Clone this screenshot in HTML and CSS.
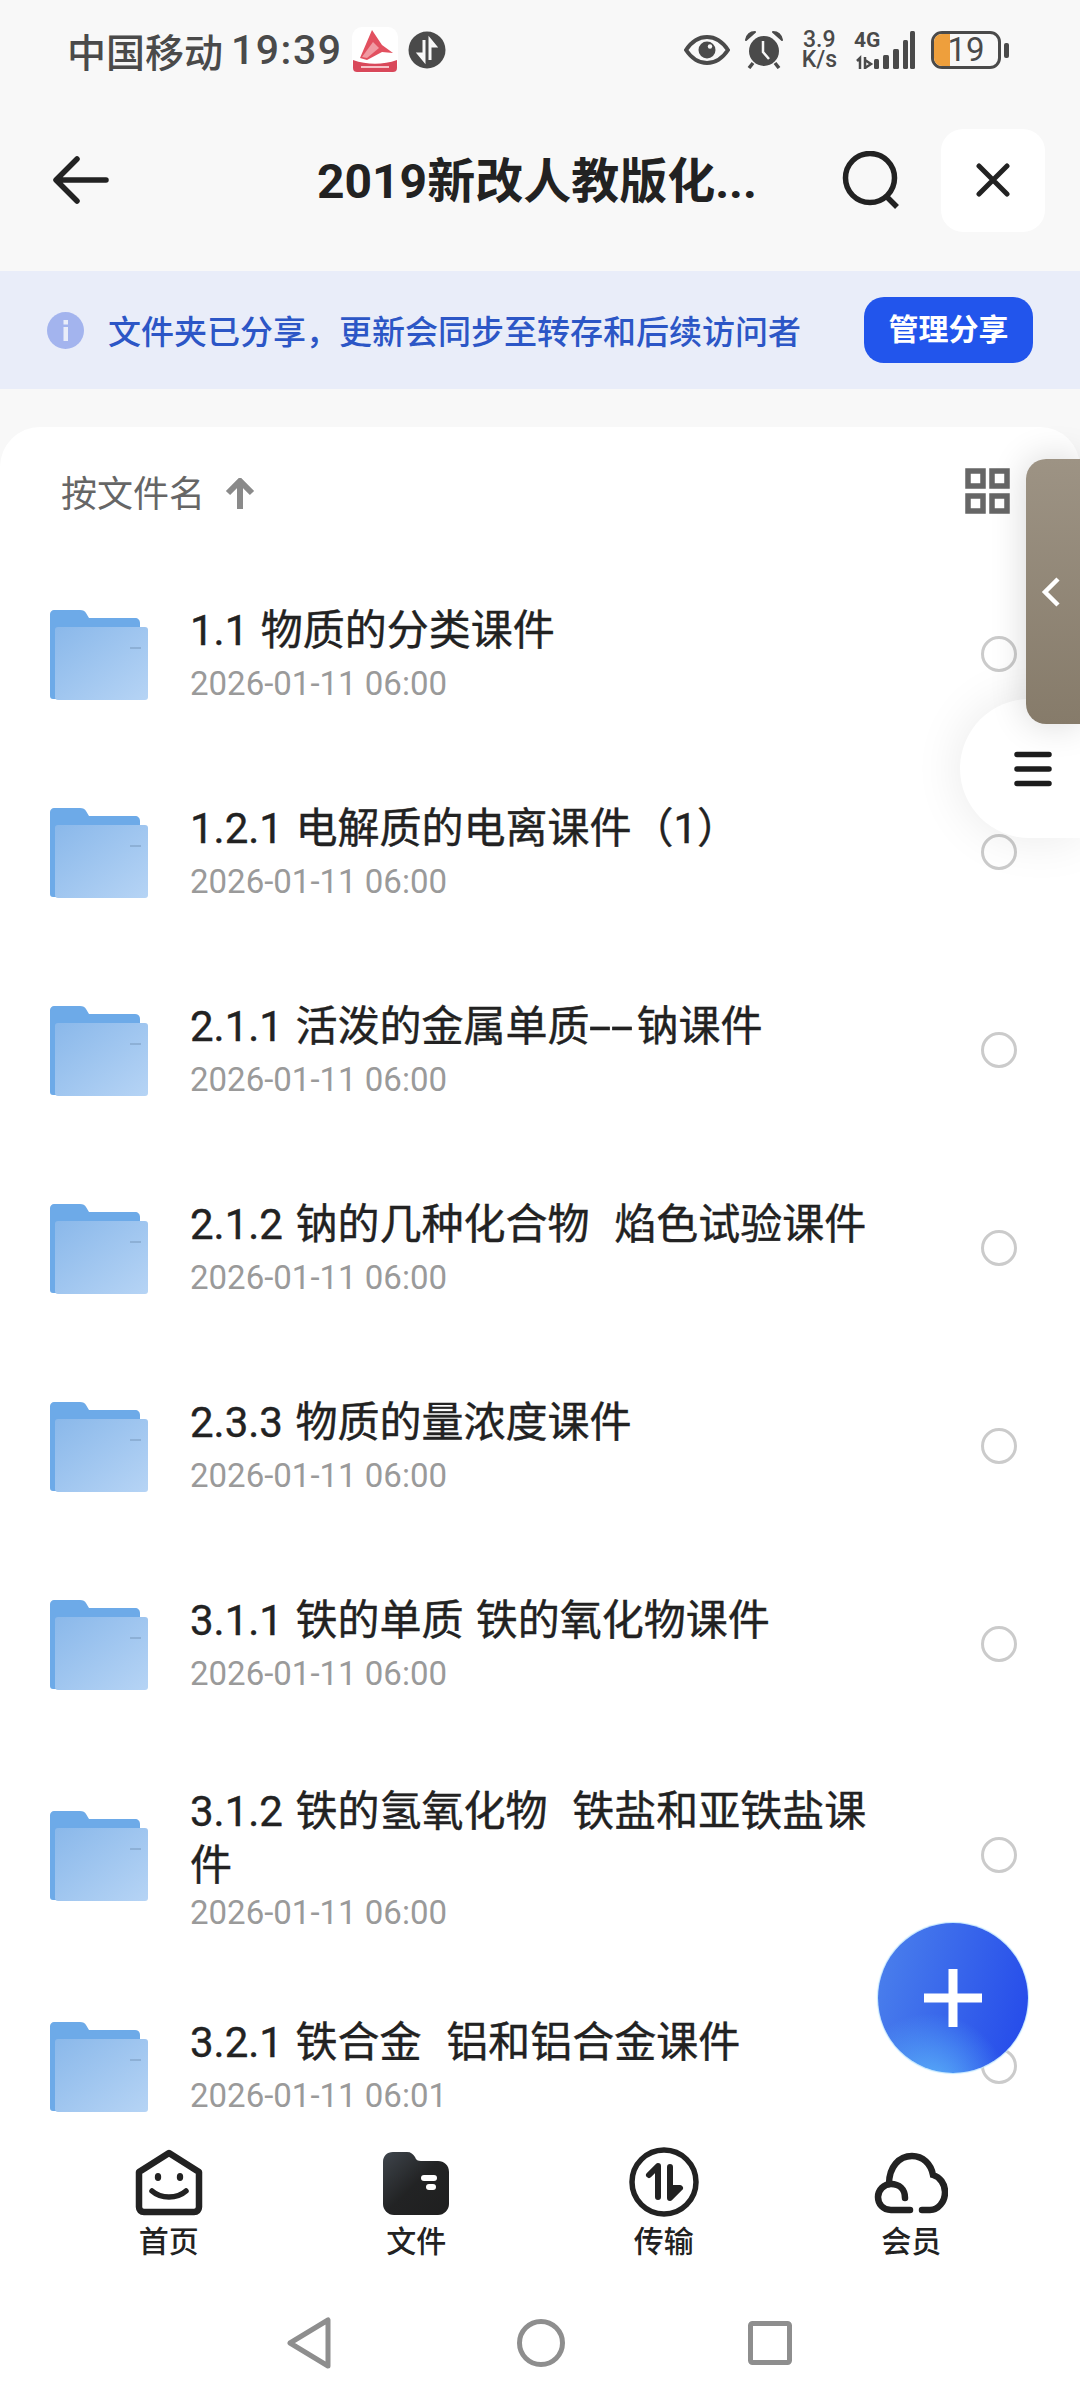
FILE: index.html
```html
<!DOCTYPE html>
<html lang="zh">
<head>
  <meta charset="UTF-8">
  <title>2019新改人教版化学</title>
  <link rel="stylesheet" href="styles.css">
</head>
<body>
<svg class="defs" width="0" height="0">
  <defs>
    <linearGradient id="folderFront" x1="0" y1="0" x2="1" y2="1">
      <stop offset="0" stop-color="#8ab8ea"/>
      <stop offset="1" stop-color="#b6d4f5"/>
    </linearGradient>
    <linearGradient id="tabFolder" x1="0" y1="0" x2="1" y2="1">
      <stop offset="0" stop-color="#3f454c"/>
      <stop offset="0.5" stop-color="#222324"/>
      <stop offset="1" stop-color="#1f1f1f"/>
    </linearGradient>
    <symbol id="folder" viewBox="0 0 98 91">
      <path d="M4 1H30C33 1 35 2 36 4L39 9H85C88 9 90 11 90 14V90H3C1 90 0 89 0 87V5C0 3 2 1 4 1Z" fill="#6daae8"/>
      <rect x="5" y="18" width="93" height="73" rx="3" fill="url(#folderFront)"/>
      <rect x="80" y="38" width="11" height="2" fill="#8db0d6"/>
    </symbol>
  </defs>
</svg>

<div class="phone">
  <!-- status bar -->
  <div class="status">
    <div class="status-left">
      <span class="carrier">中国移动</span>
      <span class="clock">19:39</span>
      <svg class="app-logo" width="46" height="46" viewBox="0 0 46 46">
        <rect width="46" height="46" rx="10" fill="#fff"/>
        <path d="M20 3L30 18L41 26L30 25L15 33L8 31Z" fill="#e2505f"/>
        <path d="M21 15L27 21L15 31L10 30Z" fill="#f09aa2"/>
        <path d="M1 33C15 38 31 38 45 33V41C45 44 43 45 41 45H5C3 45 1 44 1 41Z" fill="#d9485a"/>
        <rect x="9" y="39" width="28" height="2" fill="#f6c3c8"/>
      </svg>
      <svg class="net-dot" width="38" height="38" viewBox="0 0 38 38">
        <circle cx="19" cy="19" r="18.500" fill="#4a4a4a"/>
        <path d="M16 9V29L11 23H16M22 29V9L27 15H22" fill="none" stroke="#f8f8f8" stroke-width="3"/>
      </svg>
    </div>
    <div class="status-right">
      <svg width="46" height="30" viewBox="0 0 46 30">
        <path d="M2 15C8 6 15 2 23 2C31 2 38 6 44 15C38 24 31 28 23 28C15 28 8 24 2 15Z" fill="none" stroke="#4a4a4a" stroke-width="4"/>
        <circle cx="23" cy="15" r="8.500" fill="#4a4a4a"/>
        <circle cx="26" cy="11.500" r="2.200" fill="#f8f8f8"/>
      </svg>
      <svg class="alarm" width="38" height="38" viewBox="0 0 38 38">
        <circle cx="19" cy="20" r="15" fill="#4a4a4a"/>
        <path d="M1 9C2 4 5 1 10 1ZM37 9C36 4 33 1 28 1Z" fill="#4a4a4a" stroke="#4a4a4a" stroke-width="2" stroke-linejoin="round"/>
        <path d="M8 32L4 37M30 32L34 37" stroke="#4a4a4a" stroke-width="3.500"/>
        <path d="M18 10V21L24 28" fill="none" stroke="#f8f8f8" stroke-width="2.500"/>
      </svg>
      <div class="speed"><span>3.9</span><span>K/s</span></div>
      <div class="signal">
        <span class="net-type">4G</span>
        <svg width="62" height="40" viewBox="0 0 62 40">
          <path d="M3 31L6 28V39M11 27V39M11 30L17 34L11 38" fill="none" stroke="#4a4a4a" stroke-width="2.500"/>
          <rect x="20" y="29" width="5" height="10" rx="1.500" fill="#4a4a4a"/>
          <rect x="29" y="25" width="6" height="14" rx="1.500" fill="#4a4a4a"/>
          <rect x="39" y="19" width="6" height="20" rx="1.500" fill="#4a4a4a"/>
          <rect x="49" y="10" width="5" height="29" rx="1.500" fill="#4a4a4a"/>
          <rect x="56" y="1" width="5" height="38" rx="1.500" fill="#4a4a4a"/>
        </svg>
      </div>
      <div class="battery">
        <div class="battery-body"><span class="battery-fill"></span><span class="battery-num">19</span></div>
        <span class="battery-nib"></span>
      </div>
    </div>
  </div>

  <!-- title bar -->
  <div class="topbar">
    <svg class="back" width="56" height="48" viewBox="0 0 56 48">
      <path d="M53 24H4M24 3L3 24L24 45" fill="none" stroke="#222" stroke-width="5.500" stroke-linecap="round" stroke-linejoin="round"/>
    </svg>
    <div class="title">2019新改人教版化...</div>
    <svg class="search" width="58" height="58" viewBox="0 0 58 58">
      <circle cx="28" cy="27" r="24.500" fill="none" stroke="#222" stroke-width="5.500"/>
      <path d="M44 45L55 56" stroke="#222" stroke-width="5.500"/>
    </svg>
    <div class="close-btn">
      <svg width="34" height="34" viewBox="0 0 34 34">
        <path d="M3 3L31 31M31 3L3 31" stroke="#222" stroke-width="5" stroke-linecap="round"/>
      </svg>
    </div>
  </div>

  <!-- share notice -->
  <div class="notice">
    <svg class="info" width="37" height="37" viewBox="0 0 37 37">
      <circle cx="18.500" cy="18.500" r="18.500" fill="#a3b4ee"/>
      <rect x="16.500" y="8" width="4.500" height="4.500" fill="#e9edf9"/>
      <rect x="16.500" y="15" width="4.500" height="14" fill="#e9edf9"/>
    </svg>
    <span class="notice-text">文件夹已分享，更新会同步至转存和后续访问者</span>
    <button class="manage">管理分享</button>
  </div>

  <!-- file list -->
  <div class="panel">
    <div class="sort">
      <span class="sort-name">按文件名</span>
      <svg class="sort-arrow" width="30" height="32" viewBox="0 0 30 32">
        <path d="M15 31V3M3 15L15 3L27 15" fill="none" stroke="#8a8a8a" stroke-width="6"/>
      </svg>
      <svg class="grid" width="45" height="46" viewBox="0 0 45 46">
        <path d="M3 3H18V18H3ZM27 3H42V18H27ZM3 28H18V43H3ZM27 28H42V43H27Z" fill="none" stroke="#666" stroke-width="5.500"/>
      </svg>
    </div>

    <div class="row">
      <svg class="folder"><use href="#folder"/></svg>
      <div class="info-col"><div class="name">1.1 物质的分类课件</div><div class="date">2026-01-11 06:00</div></div>
      <span class="radio"></span>
    </div>
    <div class="row">
      <svg class="folder"><use href="#folder"/></svg>
      <div class="info-col"><div class="name">1.2.1 电解质的电离课件（1）</div><div class="date">2026-01-11 06:00</div></div>
      <span class="radio"></span>
    </div>
    <div class="row">
      <svg class="folder"><use href="#folder"/></svg>
      <div class="info-col"><div class="name">2.1.1 活泼的金属单质<span class="dash">--</span>钠课件</div><div class="date">2026-01-11 06:00</div></div>
      <span class="radio"></span>
    </div>
    <div class="row">
      <svg class="folder"><use href="#folder"/></svg>
      <div class="info-col"><div class="name">2.1.2 钠的几种化合物  焰色试验课件</div><div class="date">2026-01-11 06:00</div></div>
      <span class="radio"></span>
    </div>
    <div class="row">
      <svg class="folder"><use href="#folder"/></svg>
      <div class="info-col"><div class="name">2.3.3 物质的量浓度课件</div><div class="date">2026-01-11 06:00</div></div>
      <span class="radio"></span>
    </div>
    <div class="row">
      <svg class="folder"><use href="#folder"/></svg>
      <div class="info-col"><div class="name">3.1.1 铁的单质 铁的氧化物课件</div><div class="date">2026-01-11 06:00</div></div>
      <span class="radio"></span>
    </div>
    <div class="row row-tall">
      <svg class="folder"><use href="#folder"/></svg>
      <div class="info-col"><div class="name">3.1.2 铁的氢氧化物  铁盐和亚铁盐课件</div><div class="date">2026-01-11 06:00</div></div>
      <span class="radio"></span>
    </div>
    <div class="row">
      <svg class="folder"><use href="#folder"/></svg>
      <div class="info-col"><div class="name">3.2.1 铁合金  铝和铝合金课件</div><div class="date">2026-01-11 06:01</div></div>
      <span class="radio"></span>
    </div>
  </div>

  <!-- bottom tabs -->
  <div class="tabs">
    <div class="tab">
      <svg width="72" height="72" viewBox="0 0 72 72">
        <path d="M36 7L66 26V61C66 64 64 66 61 66H11C8 66 6 64 6 61V26Z" fill="none" stroke="#222" stroke-width="6.500" stroke-linejoin="round"/>
        <ellipse cx="25" cy="31" rx="3.200" ry="4" fill="#222"/>
        <ellipse cx="47" cy="31" rx="3.200" ry="4" fill="#222"/>
        <path d="M19 45C28 53 44 53 53 45" fill="none" stroke="#222" stroke-width="5.500" stroke-linecap="round"/>
      </svg>
      <span>首页</span>
    </div>
    <div class="tab">
      <svg width="72" height="72" viewBox="0 0 72 72">
        <path d="M13 6H27C31 6 33 8 35 11C36 14 38 15 41 15H58C64 15 69 19 69 26V58C69 64 64 69 58 69H14C8 69 3 64 3 58V16C3 10 7 6 13 6Z" fill="url(#tabFolder)"/>
        <rect x="41" y="29" width="16" height="6" rx="3" fill="#fff"/>
        <rect x="46" y="38" width="10" height="6" rx="3" fill="#fff"/>
      </svg>
      <span>文件</span>
    </div>
    <div class="tab">
      <svg width="72" height="72" viewBox="0 0 72 72">
        <circle cx="36" cy="36" r="32" fill="none" stroke="#222" stroke-width="5.500"/>
        <path d="M30 51V20L21 29" fill="none" stroke="#222" stroke-width="6" stroke-linecap="round" stroke-linejoin="round"/>
        <path d="M42 21V52L52 42H42" fill="#222" stroke="#222" stroke-width="6" stroke-linecap="round" stroke-linejoin="round"/>
      </svg>
      <span>传输</span>
    </div>
    <div class="tab">
      <svg width="74" height="72" viewBox="0 0 74 72">
        <path d="M36 64H17C9 64 4 58 4 51C4 44 10 38 17 38C25 38 31 43 31 52" fill="none" stroke="#222" stroke-width="6.500" stroke-linecap="round"/>
        <path d="M15 38C15 21 25 10 38 10C49 10 57 18 59 29C66 31 71 38 71 46C71 56 64 64 56 64H48" fill="none" stroke="#222" stroke-width="6.500" stroke-linecap="round"/>
      </svg>
      <span>会员</span>
    </div>
  </div>

  <!-- system nav -->
  <div class="sysnav">
    <svg width="44" height="52" viewBox="0 0 44 52">
      <path d="M41 3V49L3 26Z" fill="none" stroke="#8e8e8e" stroke-width="5" stroke-linejoin="round"/>
    </svg>
    <svg width="48" height="48" viewBox="0 0 48 48">
      <circle cx="24" cy="24" r="21.500" fill="none" stroke="#8e8e8e" stroke-width="5"/>
    </svg>
    <svg width="44" height="44" viewBox="0 0 44 44">
      <rect x="2.500" y="2.500" width="39" height="39" rx="2" fill="none" stroke="#8e8e8e" stroke-width="5"/>
    </svg>
  </div>

  <!-- floating stuff -->
  <div class="menu-pill">
    <svg width="38" height="36" viewBox="0 0 38 36">
      <path d="M3 3.500H35M3 18H35M3 32.500H35" stroke="#1c1c1c" stroke-width="5.500" stroke-linecap="round"/>
    </svg>
  </div>
  <div class="side-tab">
    <svg width="20" height="32" viewBox="0 0 20 32">
      <path d="M17 3L4 16L17 29" fill="none" stroke="#fff" stroke-width="4.500"/>
    </svg>
  </div>
  <div class="fab">
    <svg width="58" height="58" viewBox="0 0 58 58">
      <path d="M29 0V58M0 29H58" stroke="#fff" stroke-width="9"/>
    </svg>
  </div>
</div>
</body>
</html>
```

FILE: styles.css
```css
html, body {
  margin: 0;
  padding: 0;
}

body {
  font-family: Roboto, "Noto Sans CJK SC", sans-serif;
  color: #222;
}

.defs {
  position: absolute;
}

.phone {
  position: relative;
  width: 1080px;
  height: 2400px;
  overflow: hidden;
  background-color: #f8f8f8;
}

/* status bar */
.status {
  height: 100px;
  margin-bottom: 2px;
  display: flex;
  align-items: center;
  justify-content: space-between;
  padding: 0 71px 0 67px;
  color: #4a4a4a;
}

.status-left,
.status-right {
  display: flex;
  align-items: center;
}

.carrier {
  font-size: 39px;
  font-weight: 500;
}

.clock {
  font-size: 41px;
  font-weight: 500;
  margin-left: 8px;
  letter-spacing: 1.5px;
}

.app-logo {
  margin-left: 9px;
}

.net-dot {
  margin-left: 10px;
}

.status-right svg {
  flex: none;
}

.alarm {
  margin-left: 15px;
}

.speed {
  display: flex;
  flex-direction: column;
  align-items: center;
  margin-left: 19px;
  font-size: 23px;
  line-height: 20px;
  font-weight: 500;
}

.signal {
  position: relative;
  width: 62px;
  height: 40px;
  margin-left: 17px;
}

.net-type {
  position: absolute;
  left: 0;
  top: -1px;
  font-size: 21px;
  line-height: 22px;
  font-weight: 700;
}

.battery {
  display: flex;
  align-items: center;
  margin-left: 15px;
}

.battery-body {
  position: relative;
  width: 64px;
  height: 32px;
  border: 3px solid #4a4a4a;
  border-radius: 11px;
  display: flex;
  align-items: center;
  justify-content: center;
  overflow: hidden;
}

.battery-fill {
  position: absolute;
  left: 0;
  top: 0;
  bottom: 0;
  width: 16px;
  background-color: #ee9f3c;
}

.battery-num {
  position: relative;
  font-size: 33px;
  line-height: 32px;
}

.battery-nib {
  width: 5px;
  height: 15px;
  margin-left: 3px;
  border-radius: 2px;
  background-color: #4a4a4a;
}

/* title bar */
.topbar {
  height: 156px;
  display: flex;
  align-items: center;
  padding-left: 53px;
}

.title {
  width: 440px;
  margin-left: 208px;
  margin-top: -6px;
  font-size: 48px;
  font-weight: 700;
  white-space: nowrap;
  color: #222;
}

.search {
  margin-left: 85px;
  flex: none;
}

.close-btn {
  width: 104px;
  height: 103px;
  margin-left: 41px;
  border-radius: 22px;
  background-color: #fff;
  display: flex;
  align-items: center;
  justify-content: center;
}

/* notice */
.notice {
  height: 118px;
  margin-top: 13px;
  display: flex;
  align-items: center;
  padding-left: 47px;
  background-color: #e9edf9;
}

.notice-text {
  margin-left: 24px;
  font-size: 33px;
  font-weight: 500;
  color: #2c56c6;
  white-space: nowrap;
}

.manage {
  width: 169px;
  height: 66px;
  margin-left: 63px;
  padding: 0;
  border: none;
  border-radius: 20px;
  background-color: #2255ec;
  color: #fff;
  font-family: inherit;
  font-size: 30px;
  font-weight: 700;
  line-height: 60px;
}

/* list */
.panel {
  height: 1693px;
  margin-top: 38px;
  border-radius: 40px 40px 0 0;
  background-color: #fff;
  overflow: hidden;
}

.sort {
  height: 128px;
  display: flex;
  align-items: center;
  padding: 0 70px 0 61px;
  box-sizing: border-box;
}

.sort-name {
  font-size: 36px;
  color: #666;
}

.sort-arrow {
  margin-left: 20px;
  margin-top: 6px;
}

.grid {
  margin-left: auto;
}

.row {
  height: 198px;
  display: flex;
  align-items: center;
  padding-left: 50px;
}

.row-tall {
  height: 224px;
}

.row-tall .info-col {
  margin-top: 8px;
}

.folder {
  width: 98px;
  height: 91px;
  flex: none;
}

.info-col {
  width: 700px;
  margin-left: 42px;
}

.name {
  font-size: 42px;
  line-height: 54px;
  white-space: pre-wrap;
  word-spacing: 2px;
  color: #222;
  -webkit-text-stroke: 0.4px #222;
}

.dash {
  display: inline-block;
  width: 47px;
  transform: scaleX(1.9);
  transform-origin: left center;
}

.date {
  margin-top: 6px;
  font-size: 33px;
  line-height: 40px;
  color: #9a9a9a;
}

.row-tall .date {
  margin-top: 0;
}

.radio {
  width: 36px;
  height: 36px;
  margin-left: 91px;
  box-sizing: border-box;
  border: 3.5px solid #cbcbcb;
  border-radius: 50%;
  flex: none;
}

/* bottom tabs */
.tabs {
  height: 165px;
  display: flex;
  padding: 26px 45px 0;
  box-sizing: border-box;
  background-color: #fff;
}

.tab {
  width: 248px;
  display: flex;
  flex-direction: column;
  align-items: center;
  font-size: 30px;
  font-weight: 500;
  line-height: 40px;
}

.tab span {
  margin-top: 4px;
}

.sysnav {
  height: 115px;
  display: flex;
  align-items: center;
  background-color: #fff;
  padding-left: 287px;
  gap: 186px;
}

.sysnav svg:last-child {
  margin-left: -3px;
}

/* floating */
.menu-pill {
  position: absolute;
  left: 960px;
  top: 699px;
  width: 120px;
  height: 139px;
  border-radius: 70px 0 0 70px;
  background-color: #fff;
  box-shadow: 0 0 50px rgba(0, 0, 0, 0.09);
  display: flex;
  align-items: center;
  padding-left: 54px;
  box-sizing: border-box;
}

.side-tab {
  position: absolute;
  left: 1026px;
  top: 459px;
  width: 54px;
  height: 265px;
  border-radius: 20px 0 0 20px;
  background: linear-gradient(180deg, #9d9384, #867b6a);
  box-shadow: 0 0 36px rgba(0, 0, 0, 0.16);
  display: flex;
  align-items: center;
  padding-left: 15px;
  box-sizing: border-box;
}

.fab {
  position: absolute;
  left: 878px;
  top: 1923px;
  width: 150px;
  height: 150px;
  border-radius: 50%;
  background:
    radial-gradient(circle at 35% 112%, #5cb6fa 0, rgba(92, 182, 250, 0) 40%),
    linear-gradient(105deg, #4c82ec, #2348ea);
  box-shadow: 0 0 1px 1px #bfe7ff;
  display: flex;
  align-items: center;
  justify-content: center;
}
```
